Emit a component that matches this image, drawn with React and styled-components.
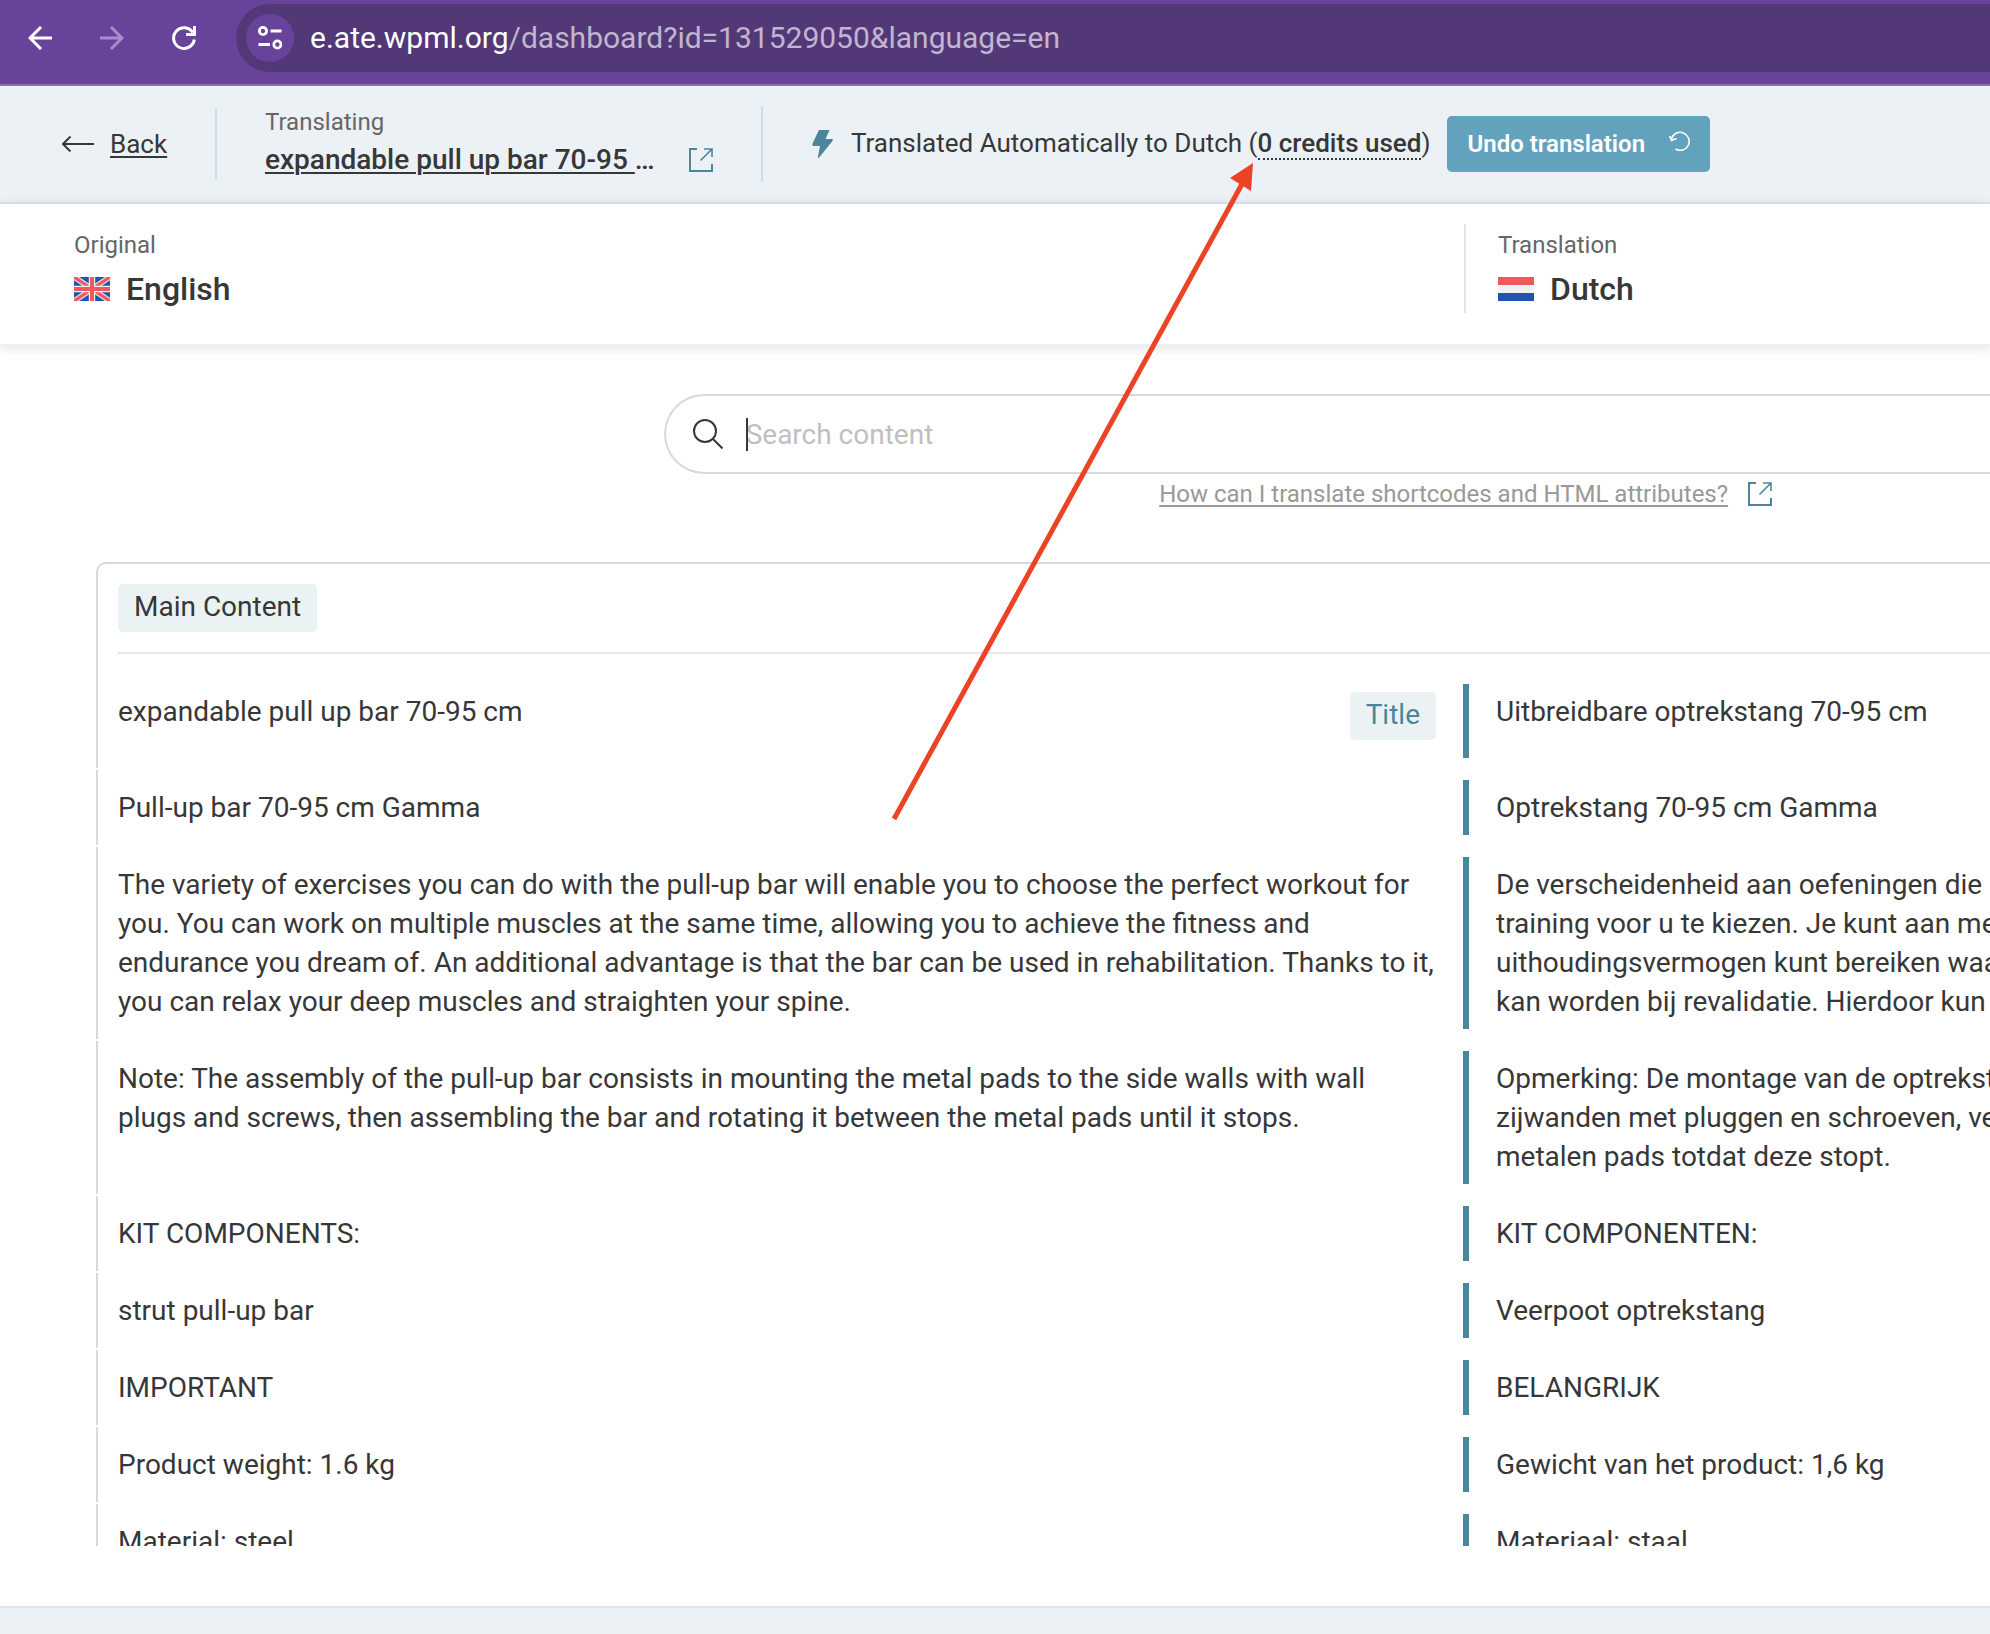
import React from "react";
import styled, { createGlobalStyle } from "styled-components";

const GlobalStyle = createGlobalStyle`
  *, *::before, *::after { box-sizing: border-box; }
  html, body { margin: 0; padding: 0; }
  body {
    font-family: Roboto, "Liberation Sans", sans-serif;
    font-size: 28px;
    line-height: 39px;
    color: #373737;
    background: #fff;
    overflow: hidden;
  }
  button, input { font: inherit; }
`;

const Page = styled.div`
  position: relative;
  display: flex;
  flex-direction: column;
  height: 100vh;
  overflow: hidden;
`;

/* Browser bar */
const BrowserBar = styled.div`
  display: flex;
  flex: none;
  align-items: flex-start;
  height: 86px;
  padding: 4px 0 0 16px;
  background: #67439a;
  border-bottom: 2px solid #8f6cb2;
`;

const NavButton = styled.button`
  display: flex;
  align-items: center;
  justify-content: center;
  width: 48px;
  height: 68px;
  margin-right: 24px;
  padding: 0;
  border: 0;
  background: none;
  color: ${(p) => (p.$dim ? "#a68fc6" : "#fff")};
`;

const AddressBar = styled.div`
  display: flex;
  flex: 1;
  align-items: center;
  gap: 16px;
  height: 68px;
  margin-left: 4px;
  padding-left: 10px;
  border-radius: 34px 0 0 34px;
  background: #533878;
`;

const SiteInfo = styled.button`
  display: flex;
  align-items: center;
  justify-content: center;
  width: 48px;
  height: 48px;
  padding: 0;
  border: 0;
  border-radius: 50%;
  background: #67439a;
  color: #fff;
`;

const Url = styled.span`
  padding-bottom: 2px;
  color: #c1b5d0;
  font-size: 30px;
  white-space: nowrap;
`;

const Host = styled.span`
  color: #fff;
`;

/* Translation job header */
const JobHeader = styled.header`
  display: flex;
  flex: none;
  align-items: center;
  height: 118px;
  padding-left: 62px;
  background: #ebf1f4;
  border-bottom: 2px solid #dbe6e9;
  font-size: 26px;
  line-height: 36px;
  white-space: nowrap;
`;

const BackLink = styled.a`
  display: flex;
  align-items: center;
  gap: 16px;
  width: 153px;
  color: #373737;
  text-decoration: none;
  span { text-decoration: underline; text-underline-offset: 3px; text-decoration-thickness: 2px; }
`;

const Job = styled.div`
  display: flex;
  align-items: flex-end;
  gap: 32px;
  width: 546px;
  height: 72px;
  padding-left: 48px;
  border-left: 2px solid #cddfe5;
`;

const JobText = styled.div`
  width: 392px;
`;

const Caption = styled.div`
  color: #666;
  font-size: 24px;
  line-height: 36px;
`;

const JobTitle = styled.div`
  overflow: hidden;
  height: 40px;
  font-size: 28px;
  line-height: 40px;
  text-overflow: ellipsis;
  color: #373737;
  font-weight: 500;
  a { color: inherit; text-decoration: underline; text-underline-offset: 3px; text-decoration-thickness: 2px; }
`;

const IconLink = styled.a`
  display: flex;
  color: #4b869c;
`;

const TitleIconLink = styled(IconLink)`
  padding-bottom: 8px;
`;

const Status = styled.div`
  display: flex;
  align-items: center;
  height: 76px;
  padding-left: 49px;
  border-left: 2px solid #cddfe5;
`;

const StatusText = styled.span`
  margin: 0 17px 0 18px;
  padding-bottom: 2px;
`;

const Credits = styled.span`
  font-weight: 500;
  border-bottom: 2px dotted #373737;
`;

const UndoButton = styled.button`
  display: flex;
  align-items: center;
  gap: 24px;
  height: 56px;
  padding: 0 20px;
  border: 0;
  border-radius: 5px;
  background: #62a2bd;
  color: #fff;
  font-size: 24px;
  font-weight: 600;
  svg { margin-bottom: 6px; }
`;

/* Language header */
const Languages = styled.section`
  position: relative;
  z-index: 1;
  display: grid;
  flex: none;
  grid-template-columns: minmax(0, 1464fr) minmax(0, 526fr);
  height: 142px;
  padding-top: 20px;
  background: #fff;
  border-bottom: 2px solid #ebf1f4;
  box-shadow: 0 2px 12px rgba(0, 0, 0, 0.12);
`;

const Language = styled.div`
  height: 89px;
  padding-left: ${(p) => (p.$divided ? "32px" : "74px")};
  border-left: ${(p) => (p.$divided ? "2px solid #dbe6e9" : "0")};
`;

const LanguageName = styled.div`
  display: flex;
  align-items: center;
  gap: 16px;
  margin-top: 4px;
  font-size: 32px;
  line-height: 44px;
  font-weight: 500;
`;

const LanguageCaption = styled(Caption)`
  padding-top: 3px;
`;

/* Editor */
const Editor = styled.main`
  flex: 1;
  min-height: 0;
  margin-bottom: 60px;
  padding-top: 48px;
  overflow: hidden;
`;

const SearchBox = styled.label`
  position: relative;
  display: flex;
  align-items: center;
  gap: 23px;
  height: 80px;
  margin-left: 33.35%;
  padding-left: 27px;
  border: 2px solid #d9d9d9;
  border-right: 0;
  border-radius: 40px 0 0 40px;
`;

const SearchInput = styled.input`
  flex: 1;
  min-width: 0;
  padding: 0;
  border: 0;
  outline: 0;
  background: none;
  color: #373737;
  &::placeholder { color: #bfbfbf; opacity: 1; }
`;

const Caret = styled.span`
  position: absolute;
  left: 80px;
  top: 22px;
  width: 2px;
  height: 33px;
  background: #373737;
`;

const Help = styled.p`
  display: flex;
  align-items: center;
  gap: 20px;
  margin: 0 0 48px 58.25%;
  height: 40px;
  font-size: 24px;
  white-space: nowrap;
`;

const HelpLink = styled.a`
  color: #999;
  text-decoration: underline;
  text-decoration-thickness: 2px;
  text-underline-offset: 3px;
`;

const Card = styled.section`
  margin-left: 96px;
`;

const CardHead = styled.div`
  padding: 20px 0 0 20px;
  border-top: 2px solid #d9d9d9;
  border-left: 2px solid #d9d9d9;
  border-radius: 10px 0 0 0;
`;

const CardHeadInner = styled.div`
  padding-bottom: 20px;
  border-bottom: 2px solid #e8e8e8;
`;

const Tag = styled.span`
  display: inline-block;
  flex: none;
  height: 48px;
  padding: 0 16px;
  border-radius: 5px;
  background: #eaf2f4;
  color: ${(p) => (p.$accent ? "#4b869c" : "#373737")};
  line-height: 46px;
  vertical-align: top;
`;

const Row = styled.div`
  display: grid;
  grid-template-columns: minmax(0, 1365fr) minmax(0, 527fr);
  margin-bottom: 2px;
  padding: ${(p) => (p.$first ? "30px" : "10px")} 0 10px;
  border-left: 2px solid #d9d9d9;
`;

const Source = styled.div`
  display: flex;
  align-items: flex-start;
  justify-content: space-between;
  padding: 8px 27px ${(p) => (p.$tagged ? "18px" : "8px")} 20px;
`;

const Target = styled.div`
  overflow: hidden;
  padding: 8px 0 8px 27px;
  border-left: 6px solid #4b869c;
  white-space: pre;
`;

const Footer = styled.footer`
  flex: none;
  height: 28px;
  background: #ebf1f4;
  border-top: 2px solid #dbe6e9;
`;

const Annotation = styled.svg`
  position: absolute;
  left: 880px;
  top: 150px;
  z-index: 2;
  pointer-events: none;
`;

const ExternalIcon = () => (
  <svg width="24" height="24" viewBox="0 0 24 24" fill="none" stroke="currentColor" strokeWidth="2" aria-hidden="true">
    <path d="M8 1H1V23H23V16" />
    <path d="M15 1H23V9M23 1L11.5 12.5" strokeWidth="1.6" />
  </svg>
);

const UkFlag = () => (
  <svg width="36" height="24" viewBox="0 0 36 24" aria-hidden="true">
    <rect width="36" height="24" fill="#2153b0" />
    <path d="M0 0L36 24M36 0L0 24" stroke="#f0f0f0" strokeWidth="5.6" />
    <path d="M0 0L36 24M36 0L0 24" stroke="#f05a5e" strokeWidth="3.4" />
    <path d="M18 0V24M0 12H36" stroke="#f0f0f0" strokeWidth="6.4" />
    <path d="M18 0V24M0 12H36" stroke="#f05a5e" strokeWidth="4" />
  </svg>
);

const NlFlag = () => (
  <svg width="36" height="24" viewBox="0 0 36 24" aria-hidden="true">
    <rect width="36" height="8" fill="#f05a5e" />
    <rect y="8" width="36" height="8" fill="#f0f0f0" />
    <rect y="16" width="36" height="8" fill="#2153b0" />
  </svg>
);

const rows = [
  { source: "expandable pull up bar 70-95 cm", target: "Uitbreidbare optrekstang 70-95 cm", tag: "Title" },
  { source: "Pull-up bar 70-95 cm Gamma", target: "Optrekstang 70-95 cm Gamma" },
  {
    source:
      "The variety of exercises you can do with the pull-up bar will enable you to choose the perfect workout for you. You can work on multiple muscles at the same time, allowing you to achieve the fitness and endurance you dream of. An additional advantage is that the bar can be used in rehabilitation. Thanks to it, you can relax your deep muscles and straighten your spine.",
    target:
      "De verscheidenheid aan oefeningen die\ntraining voor u te kiezen. Je kunt aan me\nuithoudingsvermogen kunt bereiken waa\nkan worden bij revalidatie. Hierdoor kun",
  },
  {
    source:
      "Note: The assembly of the pull-up bar consists in mounting the metal pads to the side walls with wall plugs and screws, then assembling the bar and rotating it between the metal pads until it stops.",
    target: "Opmerking: De montage van de optrekst\nzijwanden met pluggen en schroeven, ve\nmetalen pads totdat deze stopt.",
  },
  { source: "KIT COMPONENTS:", target: "KIT COMPONENTEN:" },
  { source: "strut pull-up bar", target: "Veerpoot optrekstang" },
  { source: "IMPORTANT", target: "BELANGRIJK" },
  { source: "Product weight: 1.6 kg", target: "Gewicht van het product: 1,6 kg" },
  { source: "Material: steel", target: "Materiaal: staal" },
];

export default function App() {
  return (
    <Page>
      <GlobalStyle />
      <BrowserBar>
        <NavButton aria-label="Go back">
          <svg width="24" height="24" viewBox="0 0 24 24" fill="none" stroke="currentColor" strokeWidth="3">
            <path d="M24 12H2M13 1L2 12L13 23" />
          </svg>
        </NavButton>
        <NavButton aria-label="Go forward" $dim>
          <svg width="24" height="24" viewBox="0 0 24 24" fill="none" stroke="currentColor" strokeWidth="3">
            <path d="M0 12H22M11 1L22 12L11 23" />
          </svg>
        </NavButton>
        <NavButton aria-label="Reload">
          <svg width="24" height="24" viewBox="0 0 24 24" fill="none" stroke="currentColor" strokeWidth="3">
            <path d="M22.3 13.5A10.4 10.4 0 1 1 20.8 6.5" />
            <path d="M22.5 0V8.5H14" />
          </svg>
        </NavButton>
        <AddressBar>
          <SiteInfo aria-label="Site information">
            <svg width="24" height="24" viewBox="0 0 24 24" fill="none" stroke="currentColor" strokeWidth="2.8">
              <circle cx="5" cy="5" r="3.6" />
              <path d="M12.5 5H23.5M0.5 18.5H12" />
              <circle cx="19.4" cy="18.5" r="3.6" />
            </svg>
          </SiteInfo>
          <Url>
            <Host>e.ate.wpml.org</Host>/dashboard?id=131529050&amp;language=en
          </Url>
        </AddressBar>
      </BrowserBar>

      <JobHeader>
        <BackLink href="#back">
          <svg width="32" height="16" viewBox="0 0 32 16" fill="none" stroke="currentColor" strokeWidth="2" aria-hidden="true">
            <path d="M32 8H1M8.5 0.5L1 8L8.5 15.5" />
          </svg>
          <span>Back</span>
        </BackLink>
        <Job>
          <JobText>
            <Caption>Translating</Caption>
            <JobTitle>
              <a href="#job">expandable pull up bar 70-95 cm</a>
            </JobTitle>
          </JobText>
          <TitleIconLink href="#open" aria-label="Open original">
            <ExternalIcon />
          </TitleIconLink>
        </Job>
        <Status>
          <svg width="21" height="28" viewBox="0 0 21 28" fill="#4b869c" aria-hidden="true">
            <path d="M7 0H17.5L13.5 9H19.8Q21.5 9 20.5 11L7.5 27Q5.5 29 6 26.5L8 16H1.5Q0 16 0.3 14Z" />
          </svg>
          <StatusText>
            Translated Automatically to Dutch (<Credits>0 credits used</Credits>)
          </StatusText>
          <UndoButton>
            Undo translation
            <svg width="21" height="20" viewBox="0 0 21 20" fill="none" stroke="currentColor" strokeWidth="1.6" aria-hidden="true">
              <path d="M2.5 8A9 9 0 1 1 6.5 18" />
              <path d="M0.6 5L2.5 9.5L7.5 7.5" />
            </svg>
          </UndoButton>
        </Status>
      </JobHeader>

      <Languages>
        <Language>
          <LanguageCaption>Original</LanguageCaption>
          <LanguageName>
            <UkFlag />
            English
          </LanguageName>
        </Language>
        <Language $divided>
          <LanguageCaption>Translation</LanguageCaption>
          <LanguageName>
            <NlFlag />
            Dutch
          </LanguageName>
        </Language>
      </Languages>

      <Editor>
        <SearchBox>
          <svg width="30" height="30" viewBox="0 0 30 30" fill="none" stroke="#373737" strokeWidth="2" aria-hidden="true">
            <circle cx="12" cy="12" r="11" />
            <path d="M19.5 19.5L29.5 29.5" />
          </svg>
          <SearchInput type="text" placeholder="Search content" aria-label="Search content" />
          <Caret />
        </SearchBox>
        <Help>
          <HelpLink href="#help">How can I translate shortcodes and HTML attributes?</HelpLink>
          <IconLink href="#help" aria-label="Open help">
            <ExternalIcon />
          </IconLink>
        </Help>
        <Card>
          <CardHead>
            <CardHeadInner>
              <Tag>Main Content</Tag>
            </CardHeadInner>
          </CardHead>
          {rows.map((row, i) => (
            <Row key={row.source} $first={i === 0}>
              <Source $tagged={Boolean(row.tag)}>
                <span>{row.source}</span>
                {row.tag && <Tag $accent>{row.tag}</Tag>}
              </Source>
              <Target>{row.target}</Target>
            </Row>
          ))}
        </Card>
      </Editor>
      <Footer />

      <Annotation width="390" height="680" viewBox="0 0 390 680" aria-hidden="true">
        <path d="M14 669L362 34" stroke="#ec4326" strokeWidth="5" />
        <path d="M373 13L350 28L371 41Z" fill="#ec4326" />
      </Annotation>
    </Page>
  );
}
